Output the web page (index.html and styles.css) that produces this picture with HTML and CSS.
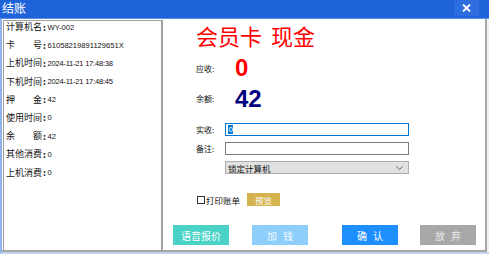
FILE: index.html
```html
<!DOCTYPE html>
<html>
<head>
<meta charset="utf-8">
<link rel="stylesheet" href="styles.css">
</head>
<body>
<div class="win">
  <div class="titlebar">
    <span class="title">结账</span>
    <span class="close"><svg width="9" height="8" viewBox="0 0 9 8"><path d="M1 0.5 L8 7.5 M8 0.5 L1 7.5" stroke="#fff" stroke-width="1.8"/></svg></span>
  </div>
  <div class="frame">
    <div class="content">
      <div class="info">
        <div class="row"><span class="lbl">计算机名</span><span class="colon">:</span><span class="val">WY-002</span></div>
        <div class="row"><span class="lbl">卡号</span><span class="colon">:</span><span class="val">61058219891129651X</span></div>
        <div class="row"><span class="lbl">上机时间</span><span class="colon">:</span><span class="val date">2024-11-21 17:48:38</span></div>
        <div class="row"><span class="lbl">下机时间</span><span class="colon">:</span><span class="val date">2024-11-21 17:48:45</span></div>
        <div class="row"><span class="lbl">押金</span><span class="colon">:</span><span class="val">42</span></div>
        <div class="row"><span class="lbl">使用时间</span><span class="colon">:</span><span class="val">0</span></div>
        <div class="row"><span class="lbl">余额</span><span class="colon">:</span><span class="val">42</span></div>
        <div class="row"><span class="lbl">其他消费</span><span class="colon">:</span><span class="val">0</span></div>
        <div class="row"><span class="lbl">上机消费</span><span class="colon">:</span><span class="val">0</span></div>
      </div>
      <div class="main">
        <div class="upper">
          <div class="headline">会员卡 现金</div>
          <div class="amount first"><span class="alabel">应收:</span><span class="big red">0</span></div>
          <div class="amount second"><span class="alabel">余额:</span><span class="big navy">42</span></div>
          <div class="form">
            <div class="frow"><span class="flabel">实收:</span><div class="input focus"><span class="sel">0</span></div></div>
            <div class="frow"><span class="flabel">备注:</span><div class="input"></div></div>
            <div class="frow"><span class="flabel"></span><div class="select"><span>锁定计算机</span><svg width="7" height="4" viewBox="0 0 7 4"><path d="M0.5 0.5 L3.5 3.5 L6.5 0.5" fill="none" stroke="#555" stroke-width="0.9"/></svg></div></div>
          </div>
          <div class="printrow"><span class="checkbox"></span><span class="plabel">打印账单</span><span class="preview">预览</span></div>
        </div>
        <div class="buttons">
          <span class="btn teal">语音报价</span>
          <span class="btn sky b2">加 钱</span>
          <span class="btn blue b3">确 认</span>
          <span class="btn grey b4">放 弃</span>
        </div>
      </div>
    </div>
  </div>
</div>
</body>
</html>
```

FILE: styles.css
```css
* { box-sizing: border-box; }
html, body { margin: 0; padding: 0; }
body {
  width: 489px;
  height: 254px;
  overflow: hidden;
  background: #ffffff;
  font-family: "Noto Sans CJK SC", "Liberation Sans", sans-serif;
}
.win {
  width: 489px;
  height: 254px;
  display: flex;
  flex-direction: column;
}
.titlebar {
  height: 19px;
  background: #1f63d8;
  border-bottom: 1px solid #5a8fe4;
  display: flex;
  justify-content: space-between;
  align-items: flex-start;
}
.title {
  color: #ffffff;
  font-size: 12px;
  line-height: 16px;
  padding-left: 2px;
}
.close {
  width: 25px;
  height: 16px;
  margin-right: 10px;
  background: #2d6ddd;
  display: flex;
  align-items: center;
  justify-content: center;
}
.frame {
  flex: 1;
  display: flex;
  border-left: 2px solid #8fb3ea;
  border-bottom: 2px solid #c3d4ee;
  background: #f2f2f2;
  padding-right: 2px;
}
.content {
  flex: 1;
  display: flex;
  background: #ffffff;
  border-right: 2px solid #a6a6a6;
  border-bottom: 2px solid #a6a6a6;
  padding-left: 1px;
}
.info {
  width: 160px;
  margin-top: 1px;
  border-top: 1px solid #a0a0a0;
  border-left: 1px solid #a0a0a0;
  border-right: 2px solid #a0a0a0;
  padding-left: 2px;
  display: flex;
  flex-direction: column;
  gap: 6.2px;
}
.row {
  height: 12px;
  display: flex;
  align-items: center;
  font-size: 9px;
  color: #111;
  white-space: nowrap;
}
.lbl {
  width: 36px;
  text-align: justify;
  text-align-last: justify;
  line-height: 12px;
}
.colon {
  width: 5px;
  text-align: center;
  font-size: 9px;
  font-weight: bold;
}
.val {
  margin-left: 0.5px;
  font-family: "Liberation Sans", sans-serif;
  font-size: 7.6px;
  color: #111;
}
.val.date { letter-spacing: -0.25px; }
.main {
  flex: 1;
  display: flex;
  flex-direction: column;
  padding-left: 10px;
}
.upper {
  padding-left: 23px;
  display: flex;
  flex-direction: column;
}
.headline {
  margin-top: 4px;
  font-size: 22px;
  line-height: 24px;
  color: #ff0000;
  word-spacing: 4px;
  white-space: nowrap;
}
.amount {
  display: flex;
  align-items: center;
  height: 26px;
}
.amount.first { margin-top: 8px; }
.amount.second { margin-top: 4.5px; }
.alabel {
  width: 39px;
  font-size: 8px;
  color: #111;
}
.big {
  font-family: "Liberation Sans", sans-serif;
  font-weight: bold;
  font-size: 24px;
  line-height: 26px;
}
.red { color: #ff0000; }
.navy { color: #000080; }
.form {
  margin-top: 11.5px;
  display: flex;
  flex-direction: column;
  gap: 6px;
}
.frow {
  display: flex;
  align-items: center;
  height: 13px;
}
.flabel {
  width: 29px;
  font-size: 8px;
  color: #111;
}
.input {
  width: 184px;
  height: 13px;
  border: 1px solid #7a7a7a;
  background: #ffffff;
  display: flex;
  align-items: center;
  padding-left: 2px;
}
.input.focus { border-color: #0078d7; }
.sel {
  background: #0078d7;
  color: #ffffff;
  font-family: "Liberation Sans", sans-serif;
  font-size: 8px;
  line-height: 9px;
  padding: 0 0.5px;
}
.select {
  width: 184px;
  height: 13px;
  border: 1px solid #adadad;
  background: #e1e1e1;
  display: flex;
  align-items: center;
  justify-content: space-between;
  padding: 0 5px 0 2px;
  font-size: 8.5px;
  color: #111;
}
.printrow {
  margin-top: 19px;
  height: 13px;
  display: flex;
  align-items: center;
}
.checkbox {
  width: 8px;
  height: 8px;
  margin-left: 1px;
  border: 1px solid #333;
  background: #fff;
}
.plabel {
  margin-left: 1px;
  font-size: 8.5px;
  color: #111;
}
.preview {
  margin-left: 7px;
  width: 33px;
  height: 13px;
  background: #d5b44f;
  color: #ffffff;
  font-size: 8.5px;
  display: flex;
  align-items: center;
  justify-content: center;
}
.buttons {
  margin-top: 19px;
  display: flex;
}
.btn {
  width: 56px;
  height: 20px;
  display: flex;
  align-items: center;
  justify-content: center;
  font-size: 10px;
  color: #ffffff;
  white-space: pre;
  word-spacing: 4px;
}
.teal { background: #4ad2c6; }
.sky { background: #8dcffa; color: #f2f9ff; }
.blue { background: #1e8fff; }
.grey { background: #a8a8a8; color: #e8e8e8; }
.b2 { margin-left: 23px; }
.b3 { margin-left: 34px; }
.b4 { margin-left: 22px; }
```
